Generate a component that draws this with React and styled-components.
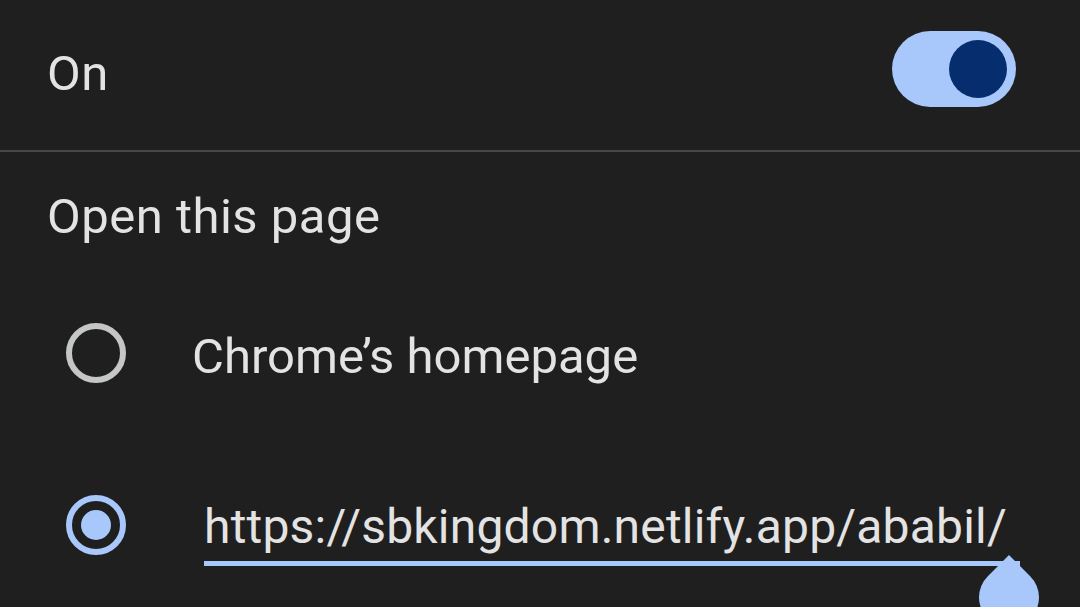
import React from "react";
import styled, { createGlobalStyle } from "styled-components";

const Global = createGlobalStyle`
  html, body { margin: 0; padding: 0; background: #1f1f1f; }
  body { font-family: Roboto, "Noto Sans", sans-serif; color: #e3e3e3; overflow: hidden; }
`;

const Page = styled.div`
  width: 1080px;
  height: 607px;
  background: #1f1f1f;
  position: relative;
  overflow: hidden;
`;

const Header = styled.div`
  height: 150px;
  display: flex;
  align-items: center;
  justify-content: space-between;
  padding: 0 64px 0 47px;
  box-sizing: border-box;
`;

const Title = styled.div`
  font-size: 49px;
  line-height: 1;
  letter-spacing: 0.5px;
  margin-bottom: ${(p) => p.$mb || 0}px;
`;

const Track = styled.div`
  width: 124px;
  height: 76px;
  border-radius: 38px;
  background: #a8c7fa;
  display: flex;
  align-items: center;
  justify-content: flex-end;
  padding-right: 9px;
  box-sizing: border-box;
  margin-bottom: 12px;
`;

const Thumb = styled.div`
  width: 58px;
  height: 58px;
  border-radius: 50%;
  background: #062e6f;
`;

const Divider = styled.div`
  height: 2px;
  background: #474747;
`;

const Section = styled.div`
  padding: 40px 0 0 47px;
`;

const Options = styled.div`
  display: flex;
  flex-direction: column;
  padding-left: 19px;
  margin-top: 82px;
  gap: 112px;
`;

const Option = styled.div`
  display: flex;
  align-items: center;
  height: 60px;
`;

const Radio = styled.div`
  width: 60px;
  height: 60px;
  border-radius: 50%;
  border: 6px solid ${(p) => (p.$checked ? "#a8c7fa" : "#c4c7c5")};
  box-sizing: border-box;
  display: flex;
  align-items: center;
  justify-content: center;
  flex: none;
`;

const Dot = styled.div`
  width: 30px;
  height: 30px;
  border-radius: 50%;
  background: #a8c7fa;
`;

const Label = styled.div`
  font-size: 49px;
  line-height: 1;
  margin-left: 66px;
  margin-top: 6px;
`;

const Field = styled.div`
  margin-left: 78px;
  width: 816px;
  position: relative;
  border-bottom: 5px solid #a8c7fa;
  padding-bottom: 10px;
  margin-top: 18px;
`;

const FieldText = styled.div`
  font-size: 48px;
  line-height: 1;
  letter-spacing: 0.2px;
  white-space: nowrap;
`;

const Handle = styled.svg`
  position: absolute;
  left: 775px;
  bottom: -74px;
`;

export default function App() {
  return (
    <Page>
      <Global />
      <Header>
        <Title $mb={4}>On</Title>
        <Track>
          <Thumb />
        </Track>
      </Header>
      <Divider />
      <Section>
        <Title>Open this page</Title>
        <Options>
          <Option>
            <Radio />
            <Label>Chrome’s homepage</Label>
          </Option>
          <Option>
            <Radio $checked>
              <Dot />
            </Radio>
            <Field>
              <FieldText>https://sbkingdom.netlify.app/ababil/</FieldText>
              <Handle width="60" height="80" viewBox="0 0 60 80">
                <path d="M30 0 L51.2 21.2 A30 30 0 1 1 8.8 21.2 Z" fill="#a8c7fa" />
              </Handle>
            </Field>
          </Option>
        </Options>
      </Section>
    </Page>
  );
}
